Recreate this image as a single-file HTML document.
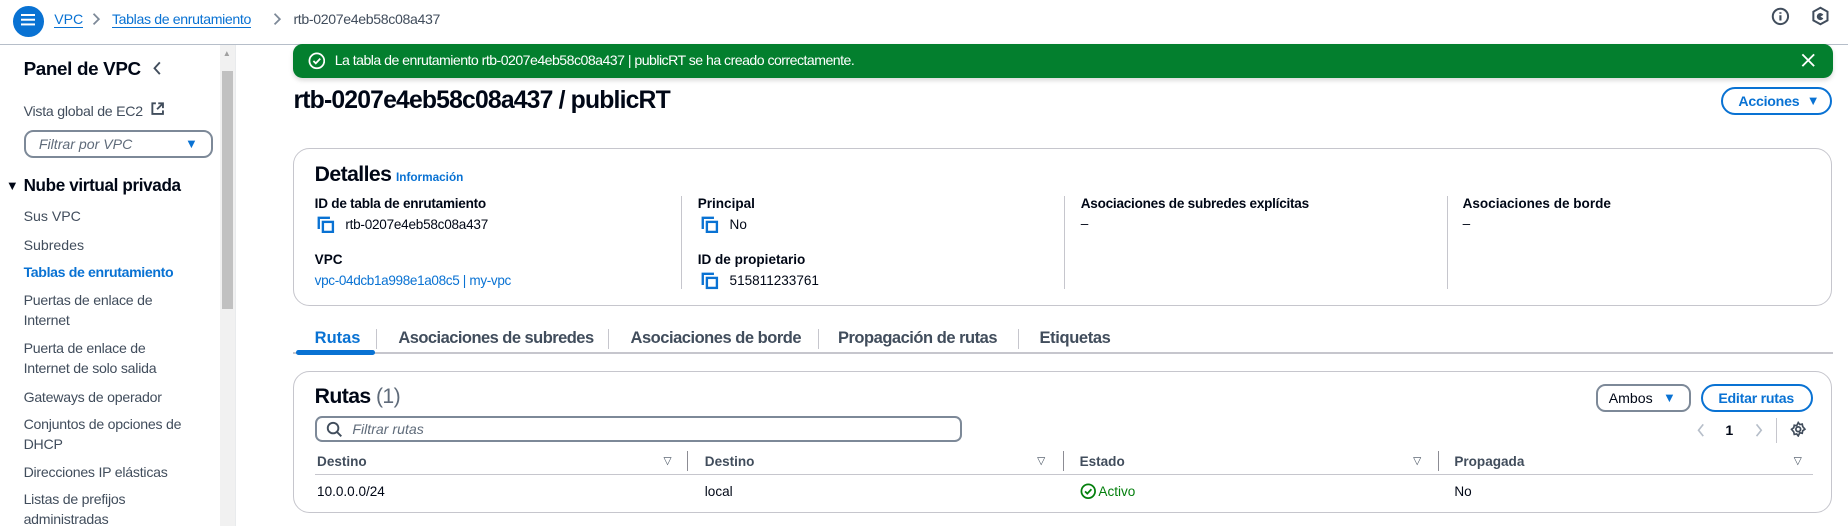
<!DOCTYPE html>
<html><head><meta charset="utf-8">
<style>
html,body{margin:0;padding:0;background:#fff;overflow:hidden;width:1848px;height:526px}
#w{position:relative;width:1568px;height:446px;zoom:1.178571;font-family:"Liberation Sans",sans-serif;color:#000716;font-size:12px}
.a{position:absolute;white-space:nowrap}
.b{font-weight:bold}
.nav{color:#414d5c;font-size:12px;line-height:17px}
.blue{color:#0972d3 !important}
.lbl{font-weight:bold;font-size:11.5px}
.val{font-size:11.5px}
.tab{font-weight:bold;font-size:14px;color:#414d5c}
.sep{position:absolute;width:1px;background:#c6c6cd}
.th{font-weight:bold;font-size:11.5px;color:#414d5c}
.tri{font-size:9px;color:#414d5c}
</style></head><body><div id="w">
<!-- top bar -->
<div class="a" style="left:0;top:37px;width:1568px;height:1px;background:#b6bec9"></div>
<div class="a" style="left:11px;top:5px;width:26px;height:26px;border-radius:50%;background:#0972d3"></div>
<div class="a" style="left:18px;top:12px;width:12px;height:2px;background:#fff;box-shadow:0 4px 0 #fff,0 8px 0 #fff"></div>
<div class="a blue" style="left:46px;top:9px;font-size:12px;border-bottom:1px solid #0972d3">VPC</div>
<svg class="a" style="left:76px;top:10px" width="10" height="12" viewBox="0 0 10 12"><path d="M3 1.5l4.5 4.5L3 10.5" fill="none" stroke="#7d8998" stroke-width="1.5"/></svg>
<div class="a blue" style="left:95px;top:9px;font-size:12px;border-bottom:1px solid #0972d3;letter-spacing:-0.3px">Tablas de enrutamiento</div>
<svg class="a" style="left:230px;top:10px" width="10" height="12" viewBox="0 0 10 12"><path d="M3 1.5l4.5 4.5L3 10.5" fill="none" stroke="#7d8998" stroke-width="1.5"/></svg>
<div class="a" style="left:249px;top:9px;font-size:12px;color:#414d5c;letter-spacing:-0.3px">rtb-0207e4eb58c08a437</div>
<svg class="a" style="left:1503px;top:6px" width="16" height="16" viewBox="0 0 16 16"><circle cx="8" cy="8" r="6.5" fill="none" stroke="#414d5c" stroke-width="1.7"/><path d="M8 7v4.5M8 4.5v1.2" stroke="#414d5c" stroke-width="1.8"/></svg>
<svg class="a" style="left:1537px;top:5px" width="16" height="18" viewBox="0 0 16 18"><path d="M8 1.5l6 3.3v7.4L8 15.5 2 12.2V4.8z" fill="none" stroke="#414d5c" stroke-width="1.7"/><path d="M10.5 7.5A3 3 0 1 0 10.5 10.5L8 9z" fill="#414d5c"/></svg>

<!-- sidebar -->
<div class="a" style="left:187px;top:38px;width:12px;height:408px;background:#f1f1f1"></div>
<div class="a" style="left:188px;top:60px;width:10px;height:202px;background:#c1c1c1"></div>
<div class="a" style="left:199px;top:38px;width:1px;height:408px;background:#e9ebed"></div>
<div class="a" style="left:189px;top:42px;font-size:7px;color:#a0a0a0">▲</div>
<div class="a b" style="left:20px;top:49px;font-size:16px;letter-spacing:-0.3px">Panel de VPC</div>
<svg class="a" style="left:128px;top:51px" width="10" height="14" viewBox="0 0 10 14"><path d="M7.5 2L3 7l4.5 5" fill="none" stroke="#414d5c" stroke-width="1.6"/></svg>
<div class="a nav" style="left:20px;top:86px;letter-spacing:-0.2px">Vista global de EC2</div>
<svg class="a" style="left:127px;top:86px" width="13" height="13" viewBox="0 0 13 13"><path d="M5 2H2v9h9V8M7 2h4v4M11 2L6 7" fill="none" stroke="#414d5c" stroke-width="1.6"/></svg>
<div class="a" style="left:20px;top:110px;width:157px;height:21px;border:2px solid #7d8998;border-radius:8px"></div>
<div class="a" style="left:33px;top:115px;font-size:12px;font-style:italic;color:#5f6b7a">Filtrar por VPC</div>
<div class="a blue" style="left:157px;top:115px;font-size:11px">▼</div>
<div class="a" style="left:5px;top:151px;font-size:11px">▼</div>
<div class="a b" style="left:20px;top:149px;font-size:14.5px;letter-spacing:-0.3px">Nube virtual privada</div>
<div class="a nav" style="left:20px;top:175px">Sus VPC</div>
<div class="a nav" style="left:20px;top:199px">Subredes</div>
<div class="a nav b blue" style="left:20px;top:222px;letter-spacing:-0.3px">Tablas de enrutamiento</div>
<div class="a nav" style="left:20px;top:246px;letter-spacing:-0.2px">Puertas de enlace de<br>Internet</div>
<div class="a nav" style="left:20px;top:287px;letter-spacing:-0.2px">Puerta de enlace de<br>Internet de solo salida</div>
<div class="a nav" style="left:20px;top:328px;letter-spacing:-0.2px">Gateways de operador</div>
<div class="a nav" style="left:20px;top:351px;letter-spacing:-0.2px">Conjuntos de opciones de<br>DHCP</div>
<div class="a nav" style="left:20px;top:392px;letter-spacing:-0.2px">Direcciones IP elásticas</div>
<div class="a nav" style="left:20px;top:415px;letter-spacing:-0.2px">Listas de prefijos<br>administradas</div>

<!-- banner -->
<div class="a" style="left:249px;top:37px;width:1306px;height:29px;background:#037f2e;border-radius:8px;box-shadow:0 2px 4px rgba(0,0,0,.15)"></div>
<svg class="a" style="left:261px;top:44px" width="15" height="15" viewBox="0 0 15 15"><circle cx="7.5" cy="7.5" r="6.3" fill="none" stroke="#fff" stroke-width="1.5"/><path d="M4.6 7.6l2 2 3.8-4" fill="none" stroke="#fff" stroke-width="1.5"/></svg>
<div class="a" style="left:284px;top:44px;color:#fff;font-size:12px;letter-spacing:-0.45px">La tabla de enrutamiento rtb-0207e4eb58c08a437 | publicRT se ha creado correctamente.</div>
<svg class="a" style="left:1527px;top:44px" width="14" height="14" viewBox="0 0 14 14"><path d="M2 2l10 10M12 2L2 12" stroke="#fff" stroke-width="1.6"/></svg>

<!-- title -->
<div class="a b" style="left:249px;top:74px;font-size:21px;letter-spacing:-0.7px">rtb-0207e4eb58c08a437 / publicRT</div>
<div class="a" style="left:1460px;top:74px;width:91px;height:20px;border:2px solid #0972d3;border-radius:14px"></div>
<div class="a b blue" style="left:1475px;top:79px;font-size:12px;letter-spacing:-0.2px">Acciones</div>
<div class="a blue" style="left:1533px;top:79px;font-size:11px">▼</div>

<!-- details -->
<div class="a" style="left:249px;top:126px;width:1304px;height:132px;border:1px solid #c6c6cd;border-radius:14px"></div>
<div class="a b" style="left:267px;top:138px;font-size:18px;letter-spacing:-0.5px">Detalles</div>
<div class="a b blue" style="left:336px;top:145px;font-size:10px">Información</div>
<div class="sep" style="left:578px;top:166px;height:79px"></div>
<div class="sep" style="left:903px;top:166px;height:79px"></div>
<div class="sep" style="left:1228px;top:166px;height:79px"></div>
<div class="a lbl" style="left:267px;top:166px;letter-spacing:-0.2px">ID de tabla de enrutamiento</div>
<div class="a val" style="left:293px;top:184px;letter-spacing:-0.2px">rtb-0207e4eb58c08a437</div>
<div class="a lbl" style="left:267px;top:214px">VPC</div>
<div class="a val blue" style="left:267px;top:232px;letter-spacing:-0.3px">vpc-04dcb1a998e1a08c5 | my-vpc</div>
<div class="a lbl" style="left:592px;top:166px">Principal</div>
<div class="a val" style="left:619px;top:184px">No</div>
<div class="a lbl" style="left:592px;top:214px">ID de propietario</div>
<div class="a val" style="left:619px;top:232px">515811233761</div>
<div class="a lbl" style="left:917px;top:166px;letter-spacing:-0.2px">Asociaciones de subredes explícitas</div>
<div class="a val" style="left:917px;top:183px">–</div>
<div class="a lbl" style="left:1241px;top:166px">Asociaciones de borde</div>
<div class="a val" style="left:1241px;top:183px">–</div>
<svg class="a" style="left:269px;top:183px" width="15" height="15" viewBox="0 0 15 15"><path d="M1.5 11V1.5H11" fill="none" stroke="#0972d3" stroke-width="2"/><rect x="5" y="5" width="8.5" height="8.5" fill="none" stroke="#0972d3" stroke-width="2"/></svg>
<svg class="a" style="left:595px;top:183px" width="15" height="15" viewBox="0 0 15 15"><path d="M1.5 11V1.5H11" fill="none" stroke="#0972d3" stroke-width="2"/><rect x="5" y="5" width="8.5" height="8.5" fill="none" stroke="#0972d3" stroke-width="2"/></svg>
<svg class="a" style="left:595px;top:231px" width="15" height="15" viewBox="0 0 15 15"><path d="M1.5 11V1.5H11" fill="none" stroke="#0972d3" stroke-width="2"/><rect x="5" y="5" width="8.5" height="8.5" fill="none" stroke="#0972d3" stroke-width="2"/></svg>

<!-- tabs -->
<div class="a" style="left:249px;top:299px;width:1306px;height:1px;background:#c6c6cd"></div>
<div class="a" style="left:251px;top:297px;width:67px;height:4px;background:#0972d3;border-radius:2px"></div>
<div class="a tab blue" style="left:267px;top:279px">Rutas</div>
<div class="sep" style="left:319px;top:279px;height:17px"></div>
<div class="a tab" style="left:338px;top:279px;letter-spacing:-0.45px">Asociaciones de subredes</div>
<div class="sep" style="left:516px;top:279px;height:17px"></div>
<div class="a tab" style="left:535px;top:279px;letter-spacing:-0.4px">Asociaciones de borde</div>
<div class="sep" style="left:694px;top:279px;height:17px"></div>
<div class="a tab" style="left:711px;top:279px;letter-spacing:-0.4px">Propagación de rutas</div>
<div class="sep" style="left:864px;top:279px;height:17px"></div>
<div class="a tab" style="left:882px;top:279px;letter-spacing:-0.3px">Etiquetas</div>

<!-- routes -->
<div class="a" style="left:249px;top:315px;width:1304px;height:119px;border:1px solid #c6c6cd;border-radius:14px"></div>
<div class="a b" style="left:267px;top:327px;font-size:18px;letter-spacing:-0.5px">Rutas <span style="font-weight:normal;color:#5f6b7a">(1)</span></div>
<div class="a" style="left:267px;top:353px;width:546px;height:19px;border:2px solid #7d8998;border-radius:6px"></div>
<svg class="a" style="left:277px;top:357px" width="14" height="14" viewBox="0 0 14 14"><circle cx="6" cy="6" r="4.5" fill="none" stroke="#414d5c" stroke-width="1.6"/><path d="M9.3 9.3L13 13" stroke="#414d5c" stroke-width="1.6"/></svg>
<div class="a" style="left:299px;top:357px;font-size:12px;font-style:italic;color:#5f6b7a">Filtrar rutas</div>
<div class="a" style="left:1354px;top:326px;width:77px;height:20px;border:2px solid #7d8998;border-radius:8px"></div>
<div class="a" style="left:1365px;top:331px;font-size:12px;color:#000716">Ambos</div>
<div class="a blue" style="left:1411px;top:331px;font-size:11px">▼</div>
<div class="a" style="left:1443px;top:326px;width:92px;height:20px;border:2px solid #0972d3;border-radius:14px"></div>
<div class="a b blue" style="left:1458px;top:331px;font-size:12px;letter-spacing:-0.2px">Editar rutas</div>
<svg class="a" style="left:1438px;top:358px" width="10" height="14" viewBox="0 0 10 14"><path d="M7 2L3 7l4 5" fill="none" stroke="#b6bec9" stroke-width="1.4"/></svg>
<div class="a b" style="left:1464px;top:358px;font-size:12px">1</div>
<svg class="a" style="left:1487px;top:358px" width="10" height="14" viewBox="0 0 10 14"><path d="M3 2l4 5-4 5" fill="none" stroke="#b6bec9" stroke-width="1.4"/></svg>
<div class="sep" style="left:1507px;top:355px;height:21px"></div>
<svg class="a" style="left:1519px;top:357px" width="14" height="14" viewBox="0 0 14 14"><circle cx="7" cy="7" r="2" fill="none" stroke="#414d5c" stroke-width="1.5"/><path d="M7 1.3l1.3 1.7 2.1-.4.4 2.1L12.7 7l-1.9 1.3-.4 2.1-2.1-.4L7 12.7 5.7 11l-2.1.4-.4-2.1L1.3 7l1.9-1.3.4-2.1 2.1.4z" fill="none" stroke="#414d5c" stroke-width="1.4"/></svg>
<div class="a th" style="left:269px;top:385px">Destino</div>
<div class="a tri" style="left:563px;top:386px">▽</div>
<div class="sep" style="left:583px;top:383px;height:17px;background:#8c8c94"></div>
<div class="a th" style="left:598px;top:385px">Destino</div>
<div class="a tri" style="left:880px;top:386px">▽</div>
<div class="sep" style="left:902px;top:383px;height:17px;background:#8c8c94"></div>
<div class="a th" style="left:916px;top:385px">Estado</div>
<div class="a tri" style="left:1199px;top:386px">▽</div>
<div class="sep" style="left:1220px;top:383px;height:17px;background:#8c8c94"></div>
<div class="a th" style="left:1234px;top:385px">Propagada</div>
<div class="a tri" style="left:1522px;top:386px">▽</div>
<div class="a" style="left:267px;top:402px;width:1271px;height:1px;background:#c6c6cd"></div>
<div class="a val" style="left:269px;top:411px">10.0.0.0/24</div>
<div class="a val" style="left:598px;top:411px">local</div>
<svg class="a" style="left:916px;top:410px" width="14" height="14" viewBox="0 0 14 14"><circle cx="7" cy="7" r="5.8" fill="none" stroke="#037f0c" stroke-width="1.5"/><path d="M4.3 7.1l1.9 1.9 3.5-3.7" fill="none" stroke="#037f0c" stroke-width="1.5"/></svg>
<div class="a val" style="left:932px;top:411px;color:#037f0c">Activo</div>
<div class="a val" style="left:1234px;top:411px">No</div>
</div></body></html>
